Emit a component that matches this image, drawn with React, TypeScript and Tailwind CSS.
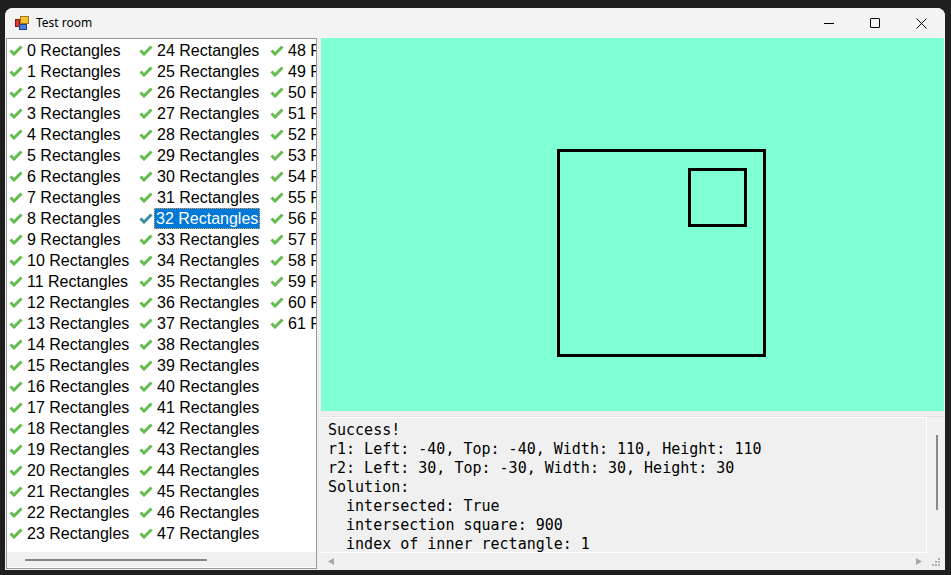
import React from "react";

const columns = [
  Array.from({ length: 24 }, (_, i) => i),
  Array.from({ length: 24 }, (_, i) => i + 24),
  Array.from({ length: 14 }, (_, i) => i + 48),
];

const selectedItem = 32;

const outputLines = [
  "Success!",
  "r1: Left: -40, Top: -40, Width: 110, Height: 110",
  "r2: Left: 30, Top: -30, Width: 30, Height: 30",
  "Solution:",
  "  intersected: True",
  "  intersection square: 900",
  "  index of inner rectangle: 1",
];

function Check({ selected }: { selected?: boolean }) {
  return (
    <svg width="14" height="11" viewBox="0 0 14 11" className="shrink-0">
      <polyline
        points="1.5,5.5 5,9 12.5,1.5"
        fill="none"
        stroke={selected ? "#3d8f9e" : "#62bd4e"}
        strokeWidth="3"
        strokeLinejoin="miter"
      />
    </svg>
  );
}

function AppIcon() {
  return (
    <svg width="14" height="14" viewBox="0 0 14 14">
      <rect x="0.5" y="3.5" width="4" height="7" fill="#d83a2a" stroke="#8a1a10" strokeWidth="1" />
      <rect x="5.5" y="0.5" width="8" height="7" fill="#f2c232" stroke="#a07a10" strokeWidth="1" />
      <rect x="4.5" y="8.5" width="7" height="5" fill="#4a7fd8" stroke="#20408a" strokeWidth="1" />
    </svg>
  );
}

function ListItem({ n, narrow }: { n: number; narrow?: boolean }) {
  const selected = n === selectedItem;
  return (
    <div className={`flex items-center h-[21px] ${narrow ? "w-[130px]" : "w-[131px]"}`}>
      <div className="w-[18px] flex justify-start">
        <Check selected={selected} />
      </div>
      <span
        className={
          selected
            ? "px-[1px] -ml-[3px] h-[21px] leading-[19px] bg-[#0078d7] text-white border border-dotted border-[#e0a060] whitespace-nowrap"
            : "whitespace-nowrap leading-[21px]"
        }
      >
        {n} Rectangles
      </span>
    </div>
  );
}

export default function App() {
  return (
    <div className="w-[951px] h-[575px] bg-[#1f1f1f] pt-[8px] pl-[5px] overflow-hidden">
      <div className="w-[940px] h-[562px] rounded-t-[8px] bg-[#f0f0f0] flex flex-col overflow-hidden">
        {/* title bar */}
        <div className="h-[30px] bg-[#f3f3f3] flex items-center shrink-0">
          <div className="ml-[10px] mt-[-1px]">
            <AppIcon />
          </div>
          <span className="ml-[7px] text-[12px] text-black" style={{ fontFamily: '"Noto Sans", sans-serif' }}>
            Test room
          </span>
          <div className="ml-auto flex h-full">
            <div className="w-[46px] flex items-center justify-center">
              <div className="w-[10px] h-[1px] bg-black" />
            </div>
            <div className="w-[46px] flex items-center justify-center">
              <div className="w-[10px] h-[10px] border border-black rounded-[1px]" />
            </div>
            <div className="w-[46px] flex items-center justify-center mr-[1px]">
              <svg width="11" height="11" viewBox="0 0 11 11">
                <path d="M0.5 0.5 L10.5 10.5 M10.5 0.5 L0.5 10.5" stroke="black" strokeWidth="1" />
              </svg>
            </div>
          </div>
        </div>

        {/* client */}
        <div className="flex-1 flex">
          {/* list view */}
          <div className="w-[311px] ml-[1px] h-[531px] border border-[#9a9a9a] bg-white flex flex-col">
            <div
              className="flex-1 flex pt-[1px] pl-[2px] overflow-hidden text-[16px] text-black"
              style={{ fontFamily: '"Liberation Sans", Arial, sans-serif' }}
            >
              {columns.map((col, ci) => (
                <div key={ci} className="flex flex-col shrink-0">
                  {col.map((n) => (
                    <ListItem key={n} n={n} narrow={ci === 0} />
                  ))}
                </div>
              ))}
            </div>
            <div className="h-[15px] bg-[#f0f0f0] flex items-center pl-[18px] mb-[1px]">
              <div className="w-[182px] h-[2px] bg-[#858585]" />
            </div>
          </div>

          {/* splitter */}
          <div className="w-[4px]" />

          {/* right panel */}
          <div className="w-[623px] flex flex-col">
            <div className="h-[373px] bg-[#7fffd4] relative">
              <svg width="623" height="373" className="absolute inset-0">
                <rect x="237.5" y="112.5" width="206" height="205" fill="none" stroke="black" strokeWidth="3" />
                <rect x="368.5" y="131.5" width="56" height="56" fill="none" stroke="black" strokeWidth="3" />
              </svg>
            </div>
            <div className="h-[5px]" />
            <div className="h-[153px] flex flex-col bg-[#f0f0f0] border-t border-[#e3e3e3]">
              <div className="flex flex-1 min-h-0">
                <div
                  className="flex-1 border-t border-r border-b border-white pl-[7px] pt-[3px] overflow-hidden text-[15px] leading-[19px] text-black"
                  style={{ fontFamily: '"DejaVu Sans Mono", "Liberation Mono", monospace' }}
                >
                  {outputLines.map((l, i) => (
                    <div key={i} className="whitespace-pre">
                      {l}
                    </div>
                  ))}
                </div>
                <div className="w-[17px] flex justify-center pt-[18px]">
                  <div className="w-[2px] h-[75px] bg-[#8a8a8a] ml-[2px]" />
                </div>
              </div>
              <div className="h-[16px] flex items-center shrink-0">
                <svg width="6" height="7" viewBox="0 0 6 7" className="ml-[7px]">
                  <polygon points="6,0 0,3.5 6,7" fill="#a8a8a8" />
                </svg>
                <svg width="6" height="7" viewBox="0 0 6 7" className="ml-auto mr-[5px]">
                  <polygon points="0,0 6,3.5 0,7" fill="#a8a8a8" />
                </svg>
                <svg width="17" height="16" viewBox="0 0 17 16">
                  <g fill="#b0b0b0">
                    <rect x="11" y="5" width="2" height="2" />
                    <rect x="8" y="8" width="2" height="2" />
                    <rect x="11" y="8" width="2" height="2" />
                    <rect x="5" y="11" width="2" height="2" />
                    <rect x="8" y="11" width="2" height="2" />
                    <rect x="11" y="11" width="2" height="2" />
                  </g>
                </svg>
              </div>
            </div>
          </div>
        </div>
      </div>
    </div>
  );
}
